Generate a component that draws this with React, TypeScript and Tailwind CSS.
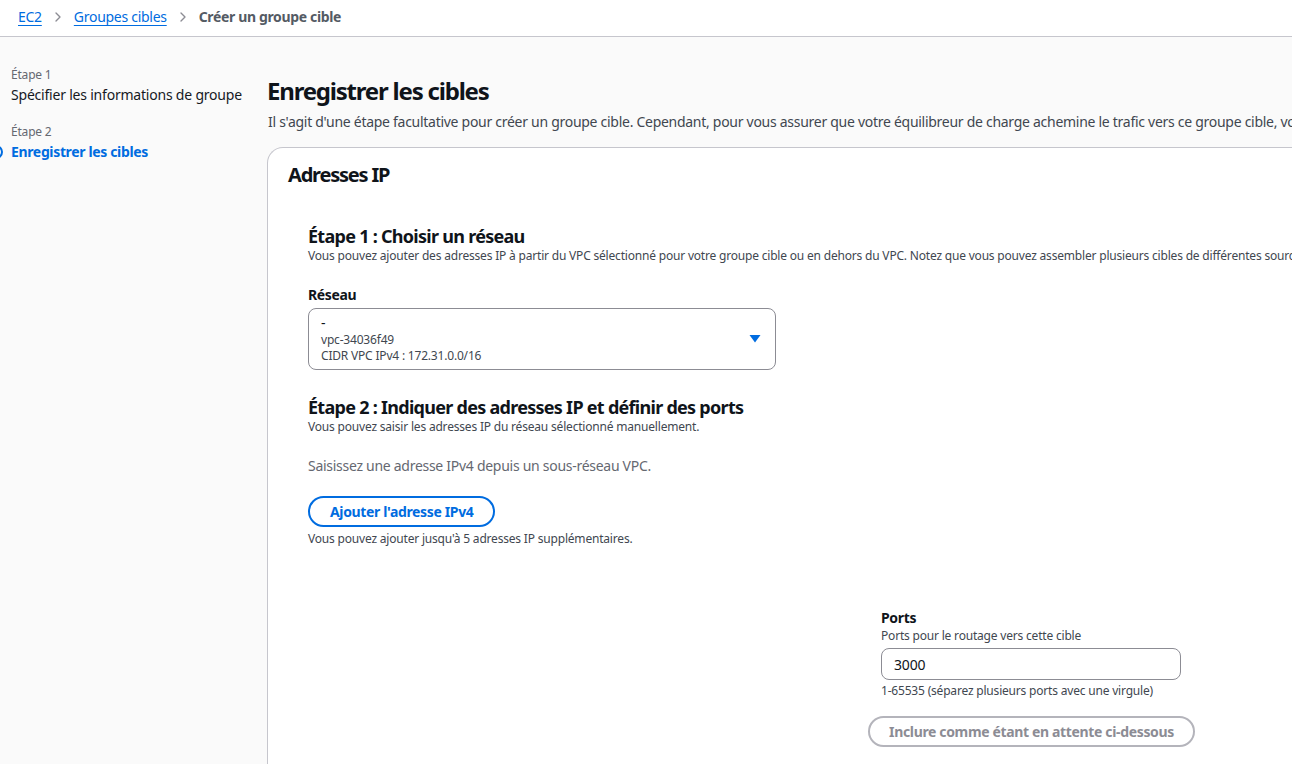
import { ChevronRight } from 'lucide-react';

const font = { fontFamily: '"Noto Sans", "Open Sans", Arial, sans-serif' };

const Breadcrumbs = () => (
  <div className="h-[37px] bg-white border-b border-[#c6c6cd] flex items-center pb-[3px] pl-[18px] text-[14px] tracking-[-0.02em]">
    <a className="text-[#006ce0] underline underline-offset-[3px]">EC2</a>
    <ChevronRight className="w-4 h-4 mx-[8px] text-[#8c8c94]" strokeWidth={2} />
    <a className="text-[#006ce0] underline underline-offset-[3px]">Groupes cibles</a>
    <ChevronRight className="w-4 h-4 mx-[8px] text-[#8c8c94]" strokeWidth={2} />
    <span className="font-bold text-[#545b64] tracking-[-0.025em]">Créer un groupe cible</span>
  </div>
);

const StepsNav = () => (
  <div className="w-[267px] shrink-0 pt-[30px] pl-[11px] relative">
    <div className="text-[12px] text-[#656871] leading-[16px]">Étape 1</div>
    <div className="text-[14px] text-[#16191f] leading-[20px] mt-[2px] tracking-[-0.015em]">Spécifier les informations de groupe</div>
    <div className="text-[12px] text-[#656871] leading-[16px] mt-[19px]">Étape 2</div>
    <div className="relative mt-[2px]">
      <span className="absolute -left-[22px] top-[3px] w-[14px] h-[14px] rounded-full border-2 border-[#006ce0]" />
      <div className="text-[14px] font-bold text-[#006ce0] leading-[20px] tracking-[-0.025em]">Enregistrer les cibles</div>
    </div>
  </div>
);

const RegisterTargets = () => (
  <div className="flex-1 min-w-0 pt-[39px]">
    <h1 className="text-[24px] font-bold text-[#0f141a] leading-[30px] tracking-[-0.05em]">Enregistrer les cibles</h1>
    <p className="text-[14px] text-[#414750] leading-[20px] mt-[6px] whitespace-nowrap pl-[1px] tracking-[-0.02em]">
      Il s'agit d'une étape facultative pour créer un groupe cible. Cependant, pour vous assurer que votre équilibreur de charge achemine le trafic vers ce groupe cible, vous devez enregistrer vos cibles.
    </p>

    <div className="mt-[15px] bg-white border border-[#c6c6cd] border-r-0 rounded-tl-[16px] min-h-[700px] pl-[20px] pt-[14px]">
      <h2 className="text-[20px] font-bold text-[#0f141a] leading-[26px] tracking-[-0.06em]">Adresses IP</h2>

      <div className="pl-[20px] pt-[36px]">
        <h3 className="text-[18px] font-bold text-[#0f141a] leading-[24px] tracking-[-0.04em]">Étape 1 : Choisir un réseau</h3>
        <p className="text-[12px] text-[#414750] leading-[16px] whitespace-nowrap">
          Vous pouvez ajouter des adresses IP à partir du VPC sélectionné pour votre groupe cible ou en dehors du VPC. Notez que vous pouvez assembler plusieurs cibles de différentes sources.
        </p>

        <label className="block text-[14px] font-bold text-[#0f141a] leading-[20px] mt-[21px] tracking-[-0.025em]">Réseau</label>
        <div className="mt-[3px] w-[468px] h-[62px] border border-[#8c8c94] rounded-[8px] flex items-center pl-[12px] pr-[14px]">
          <div className="flex-1 leading-[16px]">
            <div className="text-[14px] text-[#0f141a] leading-[18px]">-</div>
            <div className="text-[12px] text-[#414750]">vpc-34036f49</div>
            <div className="text-[12px] text-[#414750]">CIDR VPC IPv4 : 172.31.0.0/16</div>
          </div>
          <svg width="12" height="10" viewBox="0 0 12 10">
            <path d="M0.5 1h11L6 8.5z" fill="#006ce0" />
          </svg>
        </div>

        <h3 className="text-[18px] font-bold text-[#0f141a] leading-[24px] mt-[25px] tracking-[-0.04em]">Étape 2 : Indiquer des adresses IP et définir des ports</h3>
        <p className="text-[12px] text-[#414750] leading-[16px]">Vous pouvez saisir les adresses IP du réseau sélectionné manuellement.</p>

        <p className="text-[14px] text-[#656871] leading-[20px] mt-[21px] tracking-[-0.02em]">Saisissez une adresse IPv4 depuis un sous-réseau VPC.</p>

        <button className="mt-[20px] h-[31px] px-[20px] rounded-full border-2 border-[#006ce0] text-[#006ce0] text-[14px] font-bold bg-white tracking-[-0.025em]">
          Ajouter l'adresse IPv4
        </button>
        <p className="text-[12px] text-[#414750] leading-[16px] mt-[4px]">Vous pouvez ajouter jusqu'à 5 adresses IP supplémentaires.</p>

        <div className="flex mt-[61px]">
          <div className="w-[573px] shrink-0" />
          <div className="w-[300px]">
            <label className="block text-[14px] font-bold text-[#0f141a] leading-[20px] tracking-[-0.025em]">Ports</label>
            <p className="text-[12px] text-[#414750] leading-[16px]">Ports pour le routage vers cette cible</p>
            <div className="mt-[4px] h-[32px] border border-[#8c8c94] rounded-[8px] flex items-center pl-[12px] text-[14px] text-[#0f141a]">
              3000
            </div>
            <p className="text-[12px] text-[#414750] leading-[16px] mt-[3px] whitespace-nowrap">1-65535 (séparez plusieurs ports avec une virgule)</p>
            <button className="-ml-[13px] mt-[17px] w-[327px] h-[31px] rounded-full border-2 border-[#b4b4bb] text-[#8c8c94] text-[14px] font-bold bg-white whitespace-nowrap tracking-[-0.025em]">
              Inclure comme étant en attente ci-dessous
            </button>
          </div>
        </div>
      </div>
    </div>
  </div>
);

export default function App() {
  return (
    <div style={font} className="w-[1292px] h-[764px] overflow-hidden bg-[#fafafa] tracking-[-0.012em]">
      <Breadcrumbs />
      <div className="flex">
        <StepsNav />
        <RegisterTargets />
      </div>
    </div>
  );
}
